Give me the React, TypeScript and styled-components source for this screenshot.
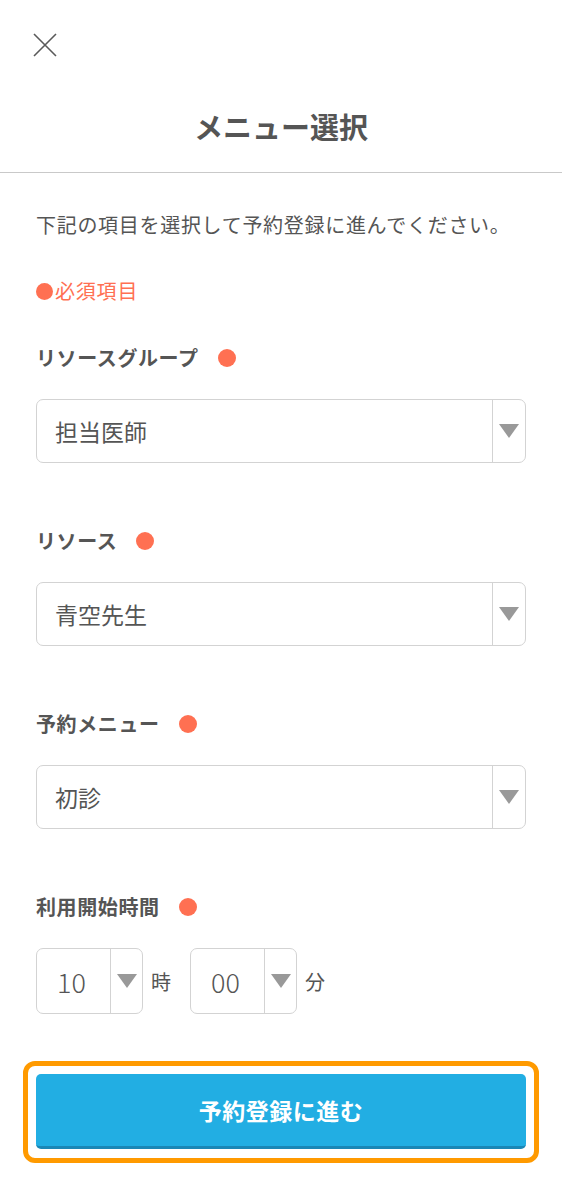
import React from "react";
import styled, { createGlobalStyle } from "styled-components";

const Global = createGlobalStyle`
  html, body { margin: 0; padding: 0; background: #fff; }
  body { font-family: "Noto Sans CJK JP", "Noto Sans", sans-serif; color: #555; }
  * { box-sizing: border-box; }
`;

const Page = styled.div`
  width: 562px;
  min-height: 1185px;
  background: #fff;
`;

const Header = styled.header`
  display: flex;
  flex-direction: column;
  border-bottom: 1px solid #c9c9c9;
  padding-bottom: 26px;
`;

const CloseRow = styled.div`
  padding: 33px 0 0 33px;
  height: 57px;
  display: flex;
`;

const CloseButton = styled.button`
  width: 24px;
  height: 24px;
  padding: 0;
  border: none;
  background: none;
  display: flex;
`;

const Title = styled.h1`
  margin: 49px 0 0;
  text-align: center;
  font-size: 29px;
  line-height: 40px;
  font-weight: 700;
  color: #555;
`;

const Content = styled.main`
  padding: 37px 36px 0;
  display: flex;
  flex-direction: column;
`;

const Description = styled.p`
  margin: 0;
  font-size: 20px;
  line-height: 30px;
  letter-spacing: 0.7px;
  color: #555;
  white-space: nowrap;
`;

const Required = styled.p`
  margin: 36px 0 0;
  font-size: 20px;
  line-height: 30px;
  letter-spacing: 0.8px;
  color: #ff7052;
  display: flex;
  align-items: center;
`;

const Dot = styled.span<{ $size: number; $gap: number }>`
  display: inline-block;
  width: ${(p) => p.$size}px;
  height: ${(p) => p.$size}px;
  border-radius: 50%;
  background: #ff7052;
  margin-left: ${(p) => p.$gap}px;
  margin-right: ${(p) => (p.$gap === 0 ? 2 : 0)}px;
  flex-shrink: 0;
`;

const Fields = styled.div`
  margin-top: 37px;
  display: flex;
  flex-direction: column;
  gap: 63px;
`;

const Field = styled.section`
  display: flex;
  flex-direction: column;
  gap: 26px;
`;

const Label = styled.div`
  display: flex;
  align-items: center;
  font-size: 20px;
  line-height: 30px;
  letter-spacing: 0.6px;
  font-weight: 700;
  color: #555;
`;

const SelectBox = styled.div`
  height: 64px;
  border: 1.5px solid #d3d3d3;
  border-radius: 7px;
  display: flex;
  background: #fff;
`;

const SelectValue = styled.div`
  flex: 1;
  display: flex;
  align-items: center;
  padding-left: 18px;
  font-size: 23px;
  color: #555;
`;

const ArrowArea = styled.div<{ $width: number }>`
  width: ${(p) => p.$width}px;
  border-left: 1.5px solid #d3d3d3;
  display: flex;
  align-items: center;
  justify-content: center;
`;

const Triangle = styled.span`
  width: 0;
  height: 0;
  border-left: 10px solid transparent;
  border-right: 10px solid transparent;
  border-top: 14px solid #999;
`;

const TimeRow = styled.div`
  display: flex;
  align-items: center;
`;

const TimeBox = styled.div`
  width: 107px;
  height: 66px;
  border: 1.5px solid #d3d3d3;
  border-radius: 7px;
  display: flex;
`;

const TimeValue = styled.div`
  flex: 1;
  display: flex;
  align-items: center;
  justify-content: center;
  padding-right: 4px;
  font-size: 27px;
  font-weight: 300;
  color: #555;
`;

const Unit = styled.span<{ $after: number }>`
  font-size: 20px;
  color: #555;
  margin-left: 8px;
  margin-right: ${(p) => p.$after}px;
`;

const SubmitFrame = styled.div`
  margin: 47px -13px 0;
  border: 5px solid #ff9a00;
  border-radius: 12px;
  padding: 8px 8px 9px;
`;

const SubmitButton = styled.button`
  width: 100%;
  height: 75px;
  border: none;
  border-bottom: 3px solid #1a87b6;
  border-radius: 5px;
  background: #22aee3;
  color: #fff;
  font-family: "Noto Sans CJK JP", "Noto Sans", sans-serif;
  font-size: 23px;
  letter-spacing: 0.5px;
  font-weight: 700;
  display: flex;
  align-items: center;
  justify-content: center;
  padding: 0 0 1px;
`;

const CloseIcon = () => (
  <svg width="24" height="24" viewBox="0 0 24 24">
    <path d="M1 1 L23 23 M23 1 L1 23" stroke="#5a5a5a" strokeWidth="1.6" fill="none" />
  </svg>
);

const Select = ({ value }: { value: string }) => (
  <SelectBox>
    <SelectValue>{value}</SelectValue>
    <ArrowArea $width={33}>
      <Triangle />
    </ArrowArea>
  </SelectBox>
);

const TimeSelect = ({ value }: { value: string }) => (
  <TimeBox>
    <TimeValue>{value}</TimeValue>
    <ArrowArea $width={32}>
      <Triangle />
    </ArrowArea>
  </TimeBox>
);

const FieldLabel = ({ text }: { text: string }) => (
  <Label>
    {text}
    <Dot $size={18} $gap={19} />
  </Label>
);

export default function App() {
  return (
    <Page>
      <Global />
      <Header>
        <CloseRow>
          <CloseButton aria-label="close">
            <CloseIcon />
          </CloseButton>
        </CloseRow>
        <Title>メニュー選択</Title>
      </Header>
      <Content>
        <Description>下記の項目を選択して予約登録に進んでください。</Description>
        <Required>
          <Dot $size={17} $gap={0} />
          必須項目
        </Required>
        <Fields>
          <Field>
            <FieldLabel text="リソースグループ" />
            <Select value="担当医師" />
          </Field>
          <Field>
            <FieldLabel text="リソース" />
            <Select value="青空先生" />
          </Field>
          <Field>
            <FieldLabel text="予約メニュー" />
            <Select value="初診" />
          </Field>
          <Field>
            <FieldLabel text="利用開始時間" />
            <TimeRow>
              <TimeSelect value="10" />
              <Unit $after={19}>時</Unit>
              <TimeSelect value="00" />
              <Unit $after={0}>分</Unit>
            </TimeRow>
          </Field>
        </Fields>
        <SubmitFrame>
          <SubmitButton>予約登録に進む</SubmitButton>
        </SubmitFrame>
      </Content>
    </Page>
  );
}
